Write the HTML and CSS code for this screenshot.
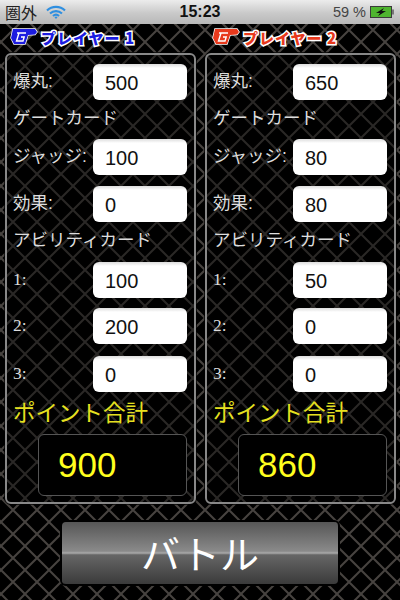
FILE: index.html
```html
<!DOCTYPE html>
<html lang="ja">
<head>
<meta charset="utf-8">
<title>バトル</title>
<link rel="stylesheet" href="styles.css">
</head>
<body>
<div class="status">
  <div class="status-left"><span>圏外</span>
    <svg class="wifi" viewBox="0 0 20 14" width="20" height="14"><path d="M1 5.500a13 13 0 0 1 18 0M4 8.500a9 9 0 0 1 12 0M7 11a4.500 4.500 0 0 1 6 0" fill="none" stroke="#2f8fe0" stroke-width="2.200"/><path d="M8.500 12.200a2.400 2.400 0 0 1 3 0L10 14z" fill="#2f8fe0"/></svg>
  </div>
  <div class="status-time">15:23</div>
  <div class="status-right"><span>59 %</span>
    <svg class="battery" viewBox="0 0 25 12" width="25" height="12"><rect x=".5" y=".5" width="21" height="11" fill="#4fb52f" stroke="#3a3a3a"/><rect x="22" y="3.500" width="2" height="5" fill="#777"/><path d="M14 2 6 7h4L8 10l8-5h-4z" fill="#111"/></svg>
  </div>
</div>
<main class="columns">
  <section class="column">
    <h2 class="player player-blue">
      <svg class="hand" viewBox="0 0 28 18" width="28" height="18"><path d="M3 1h22l2 3-2 2.500-7 .5-3 9H4L1 10z" fill="#1c1ce0" stroke="#fff" stroke-width="1.500"/><path d="M7 5h9M9 5 6.500 13H13l1.200-4H11" fill="none" stroke="#fff" stroke-width="1.400"/></svg>
      <span>プレイヤー 1</span>
    </h2>
    <div class="panel">
      <div class="row"><label class="label">爆丸:</label><div class="field">500</div></div>
      <div class="heading">ゲートカード</div>
      <div class="row"><label class="label">ジャッジ:</label><div class="field">100</div></div>
      <div class="row row-gap"><label class="label">効果:</label><div class="field">0</div></div>
      <div class="heading heading-tall">アビリティカード</div>
      <div class="row"><label class="label num">1:</label><div class="field">100</div></div>
      <div class="row row-gap-s"><label class="label num">2:</label><div class="field">200</div></div>
      <div class="row row-gap-l"><label class="label num">3:</label><div class="field">0</div></div>
      <div class="total-title">ポイント合計</div>
      <div class="total">900</div>
    </div>
  </section>
  <section class="column">
    <h2 class="player player-red">
      <svg class="hand" viewBox="0 0 28 18" width="28" height="18"><path d="M3 1h22l2 3-2 2.500-7 .5-3 9H4L1 10z" fill="#e8391c" stroke="#fff" stroke-width="1.500"/><path d="M7 5h9M9 5 6.500 13H13l1.200-4H11" fill="none" stroke="#fff" stroke-width="1.400"/></svg>
      <span>プレイヤー 2</span>
    </h2>
    <div class="panel">
      <div class="row"><label class="label">爆丸:</label><div class="field">650</div></div>
      <div class="heading">ゲートカード</div>
      <div class="row"><label class="label">ジャッジ:</label><div class="field">80</div></div>
      <div class="row row-gap"><label class="label">効果:</label><div class="field">80</div></div>
      <div class="heading heading-tall">アビリティカード</div>
      <div class="row"><label class="label num">1:</label><div class="field">50</div></div>
      <div class="row row-gap-s"><label class="label num">2:</label><div class="field">0</div></div>
      <div class="row row-gap-l"><label class="label num">3:</label><div class="field">0</div></div>
      <div class="total-title">ポイント合計</div>
      <div class="total">860</div>
    </div>
  </section>
</main>
<div class="actions"><button class="battle">バトル</button></div>
</body>
</html>
```
FILE: styles.css
```css
* { box-sizing: border-box; }
html, body { margin: 0; height: 100%; }
body {
  width: 400px;
  height: 600px;
  overflow: hidden;
  display: flex;
  flex-direction: column;
  font-family: "Liberation Sans", "Noto Sans CJK JP", sans-serif;
  color: #ddd;
  background-color: #000;
  background-image: url("data:image/svg+xml,%3Csvg xmlns='http://www.w3.org/2000/svg' width='24' height='24'%3E%3Cpath d='M0 0L24 24M24 0L0 24' stroke='%23474340' stroke-width='2'/%3E%3C/svg%3E");
  background-size: 24px 24px;
  background-position: 1px 18px;
}
.status {
  height: 24px;
  flex: none;
  display: grid;
  grid-template-columns: 1fr auto 1fr;
  align-items: center;
  padding: 0 5px 0 5px;
  background: linear-gradient(#ececec, #c9c9c9 55%, #b8b8b8);
  color: #222;
}
.status-left { display: flex; align-items: center; gap: 9px; font-size: 16px; }
.status-time { font-size: 16px; font-weight: 700; color: #111; }
.status-right { display: flex; align-items: center; justify-content: flex-end; gap: 4px; font-size: 14.500px; color: #444; }
.columns { display: flex; flex: none; gap: 9px; padding: 0 4px 0 5px; }
.column { width: 191px; }
.player {
  height: 29px;
  margin: 0;
  padding: 0 0 3px 5px;
  display: flex;
  align-items: center;
  gap: 3px;
  font-size: 15px;
  font-weight: 900;
  font-family: "Noto Sans CJK JP", sans-serif;
  -webkit-text-stroke: 3px #fff;
  paint-order: stroke fill;
  letter-spacing: 1px;
}
.player-blue { color: #1c1ce0; }
.player-red { color: #e8391c; padding-left: 7px; }
.hand { flex: none; }
.panel {
  height: 451px;
  border: 2px solid #888;
  border-radius: 6px;
  padding: 9px 7px 0 6px;
  background: rgba(0, 0, 0, .4);
  box-shadow: 0 0 0 1px rgba(0, 0, 0, .7);
}
.row { height: 36px; display: flex; align-items: center; justify-content: space-between; }
.row-gap { margin-top: 11px; }
.row-gap-s { margin-top: 10px; }
.row-gap-l { margin-top: 12px; }
.label { font-size: 17.500px; line-height: 20px; padding-bottom: 2px; font-family: "Liberation Sans", "Noto Sans CJK JP", sans-serif; color: #ddd; white-space: nowrap; }
.num { font-family: "Liberation Serif", serif; }
.field {
  width: 94px;
  height: 36px;
  background: linear-gradient(#dcdcdc, #fff 4px);
  border-radius: 6px;
  color: #111;
  font-size: 20px;
  line-height: 38px;
  padding-left: 12px;
}
.heading { height: 39px; padding-top: 6px; font-size: 17.500px; line-height: 24px; color: #ddd; }
.heading-tall { height: 40px; }
.total-title { margin-top: 6px; height: 36px; font-size: 22.500px; line-height: 32px; color: #e6e020; }
.total {
  margin-left: 25px;
  width: 149px;
  height: 62px;
  border: 1px solid #555;
  border-radius: 6px;
  background: #000;
  color: #ffff1e;
  font-size: 35px;
  line-height: 60px;
  padding-left: 19px;
}
.actions { flex: 1; display: flex; align-items: flex-start; justify-content: center; padding-top: 18px; }
.battle {
  width: 276px;
  height: 62px;
  padding: 0 0 2px;
  border: 0;
  border-radius: 4px;
  background: linear-gradient(#565656, #8a8a8a 47%, #aaa 50%, #666 53%, #3a3a3a);
  box-shadow: 0 0 0 2px #000;
  color: #fff;
  font-family: "Noto Sans CJK JP", sans-serif;
  font-size: 39px;
}
```
